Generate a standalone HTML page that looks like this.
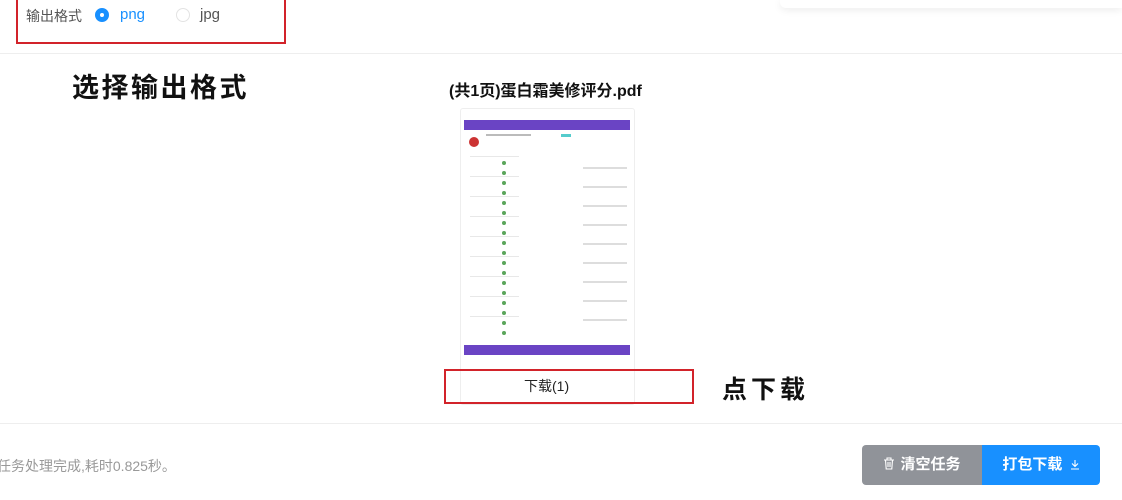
<!DOCTYPE html><html><head><meta charset="utf-8"><style>
body{margin:0;width:1122px;height:500px;background:#fff;position:relative;overflow:hidden;font-family:"Liberation Sans","Noto Sans CJK SC",sans-serif}
.a{position:absolute}
.row{position:absolute;left:6px;right:60px;height:1px;background:#e8e8e8}
.dot{position:absolute;left:38px;width:4px;height:4px;border-radius:50%;background:#5aa55a}
</style></head><body>
<div class="a" style="left:780px;top:0;width:342px;height:8px;box-shadow:0 2px 8px rgba(0,0,0,.08);border-radius:0 0 0 6px"></div>
<div class="a" style="left:16px;top:-3px;width:266px;height:43px;border:2px solid #d2232a"></div>
<div class="a" style="left:26px;top:6px;font-size:14px;color:#555">输出格式</div>
<div class="a" style="left:95px;top:8px;width:10px;height:10px;border:2px solid #1890ff;border-radius:50%;background:#1890ff"><div style="margin:3px;width:4px;height:4px;background:#fff;border-radius:50%"></div></div>
<div class="a" style="left:120px;top:6px;font-size:15px;color:#1890ff">png</div>
<div class="a" style="left:176px;top:8px;width:12px;height:12px;border:1px solid #e3e3e3;border-radius:50%"></div>
<div class="a" style="left:200px;top:6px;font-size:15px;color:#555">jpg</div>
<div class="a" style="left:0;top:53px;width:1122px;height:1px;background:#eee"></div>
<div class="a" style="left:72px;top:66px;font-size:27px;font-weight:bold;color:#111;letter-spacing:2.5px">选择输出格式</div>
<div class="a" style="left:449px;top:77px;font-size:16px;font-weight:bold;color:#111">(共1页)蛋白霜美修评分.pdf</div>
<div class="a" style="left:460px;top:108px;width:173px;height:295px;border:1px solid #eee;border-radius:3px">
 <div class="a" style="left:3px;top:11px;width:166px;height:10px;background:#6a44c4"></div>
 <div class="a" style="left:8px;top:28px;width:10px;height:10px;border-radius:50%;background:#c33"></div>
 <div class="a" style="left:25px;top:25px;width:45px;height:2px;background:#bbb"></div>
 <div class="a" style="left:100px;top:25px;width:10px;height:3px;background:#5cc"></div>
 <div class="a" style="left:3px;top:47px;width:115px;height:180px">
  <div class="row" style="top:0"></div><div class="row" style="top:20px"></div><div class="row" style="top:40px"></div><div class="row" style="top:60px"></div><div class="row" style="top:80px"></div><div class="row" style="top:100px"></div><div class="row" style="top:120px"></div><div class="row" style="top:140px"></div><div class="row" style="top:160px"></div>
  <div class="dot" style="top:5px"></div><div class="dot" style="top:15px"></div><div class="dot" style="top:25px"></div><div class="dot" style="top:35px"></div><div class="dot" style="top:45px"></div><div class="dot" style="top:55px"></div><div class="dot" style="top:65px"></div><div class="dot" style="top:75px"></div><div class="dot" style="top:85px"></div><div class="dot" style="top:95px"></div><div class="dot" style="top:105px"></div><div class="dot" style="top:115px"></div><div class="dot" style="top:125px"></div><div class="dot" style="top:135px"></div><div class="dot" style="top:145px"></div><div class="dot" style="top:155px"></div><div class="dot" style="top:165px"></div><div class="dot" style="top:175px"></div>
 </div>
 <div class="a" style="left:122px;top:50px;width:44px;height:170px;background:repeating-linear-gradient(#fff 0 8px,#ddd 8px 10px,#fff 10px 19px)"></div>
 <div class="a" style="left:3px;top:236px;width:166px;height:10px;background:#6a44c4"></div>
</div>
<div class="a" style="left:444px;top:369px;width:246px;height:31px;border:2px solid #d2232a"></div>
<div class="a" style="left:524px;top:376px;font-size:14px;color:#222">下载(1)</div>
<div class="a" style="left:722px;top:370px;font-size:25px;font-weight:bold;color:#111;letter-spacing:4px">点下载</div>
<div class="a" style="left:0;top:423px;width:1122px;height:1px;background:#eee"></div>
<div class="a" style="left:-3px;top:456px;font-size:14px;color:#999">任务处理完成,耗时0.825秒。</div>
<div class="a" style="left:862px;top:445px;width:120px;height:40px;background:#909399;border-radius:4px 0 0 4px;color:#fff;font-size:15px;font-weight:bold;line-height:40px;text-align:center"><svg width="12" height="13" viewBox="0 0 12 13" style="vertical-align:-1px;margin-right:5px"><path d="M1 3h10M4 3V1h4v2M2.5 3l.7 9h5.6l.7-9M5 5v5M7 5v5" stroke="#fff" stroke-width="1.1" fill="none"/></svg>清空任务</div>
<div class="a" style="left:982px;top:445px;width:118px;height:40px;background:#1890ff;border-radius:0 4px 4px 0;color:#fff;font-size:15px;font-weight:bold;line-height:40px;text-align:center">打包下载 <svg width="10" height="11" viewBox="0 0 10 11" style="vertical-align:-1px;margin-left:3px"><path d="M5 1v6M2 4.5l3 3 3-3M1 10h8" stroke="#fff" stroke-width="1.1" fill="none"/></svg></div>
</body></html>
